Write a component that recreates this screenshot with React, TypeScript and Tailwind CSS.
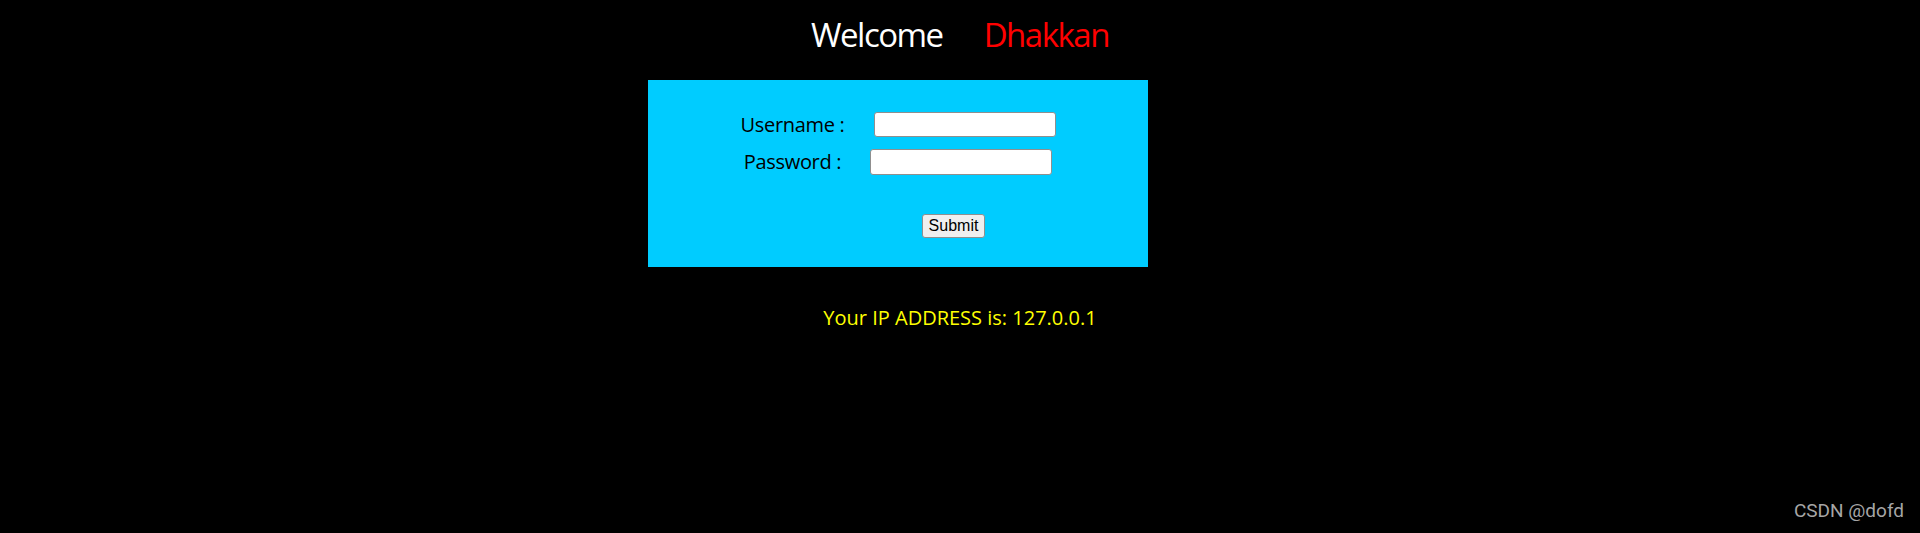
import React from "react";

export default function App() {
  return (
    <div className="relative w-full h-[533px] bg-black overflow-hidden" style={{ fontFamily: '"Open Sans", "Noto Sans", sans-serif' }}>
      <div className="pt-[13px] h-[80px] text-center text-[33px] leading-[44px] tracking-[-1.5px] text-white">
        Welcome<span className="inline-block w-[41px]" /><span className="text-[#ff0000]">Dhakkan</span>
      </div>
      <div className="ml-[648px] w-[500px] h-[187px] bg-[#00ccff] pt-[26px] flex flex-col items-center">
        <div className="h-[37px] flex items-center text-[20px] tracking-[-0.3px] text-black">
          <span>Username :</span>
          <input type="text" className="ml-[29px] w-[182px] h-[25px] bg-white border border-[#8f8f8f] rounded-[3px]" />
        </div>
        <div className="h-[37px] flex items-center text-[20px] tracking-[-0.3px] text-black">
          <span>Password :</span>
          <input type="password" className="ml-[29px] w-[182px] h-[26px] bg-white border border-[#8f8f8f] rounded-[3px]" />
        </div>
        <div className="mt-[33px] ml-[111px]">
          <button className="w-[63px] h-[24px] bg-[#efefef] border border-[#8f8f8f] rounded-[3px] text-[16px] leading-none text-black" style={{ fontFamily: '"Liberation Sans", Arial, sans-serif' }}>
            Submit
          </button>
        </div>
      </div>
      <div className="mt-[36px] text-center text-[20px] text-[#ffff00]">Your IP ADDRESS is: 127.0.0.1</div>
      <div className="absolute right-[16px] bottom-[8px] text-[19px] text-[#a6a6a6]" style={{ fontFamily: 'Roboto, "Liberation Sans", sans-serif' }}>
        CSDN @dofd
      </div>
    </div>
  );
}
